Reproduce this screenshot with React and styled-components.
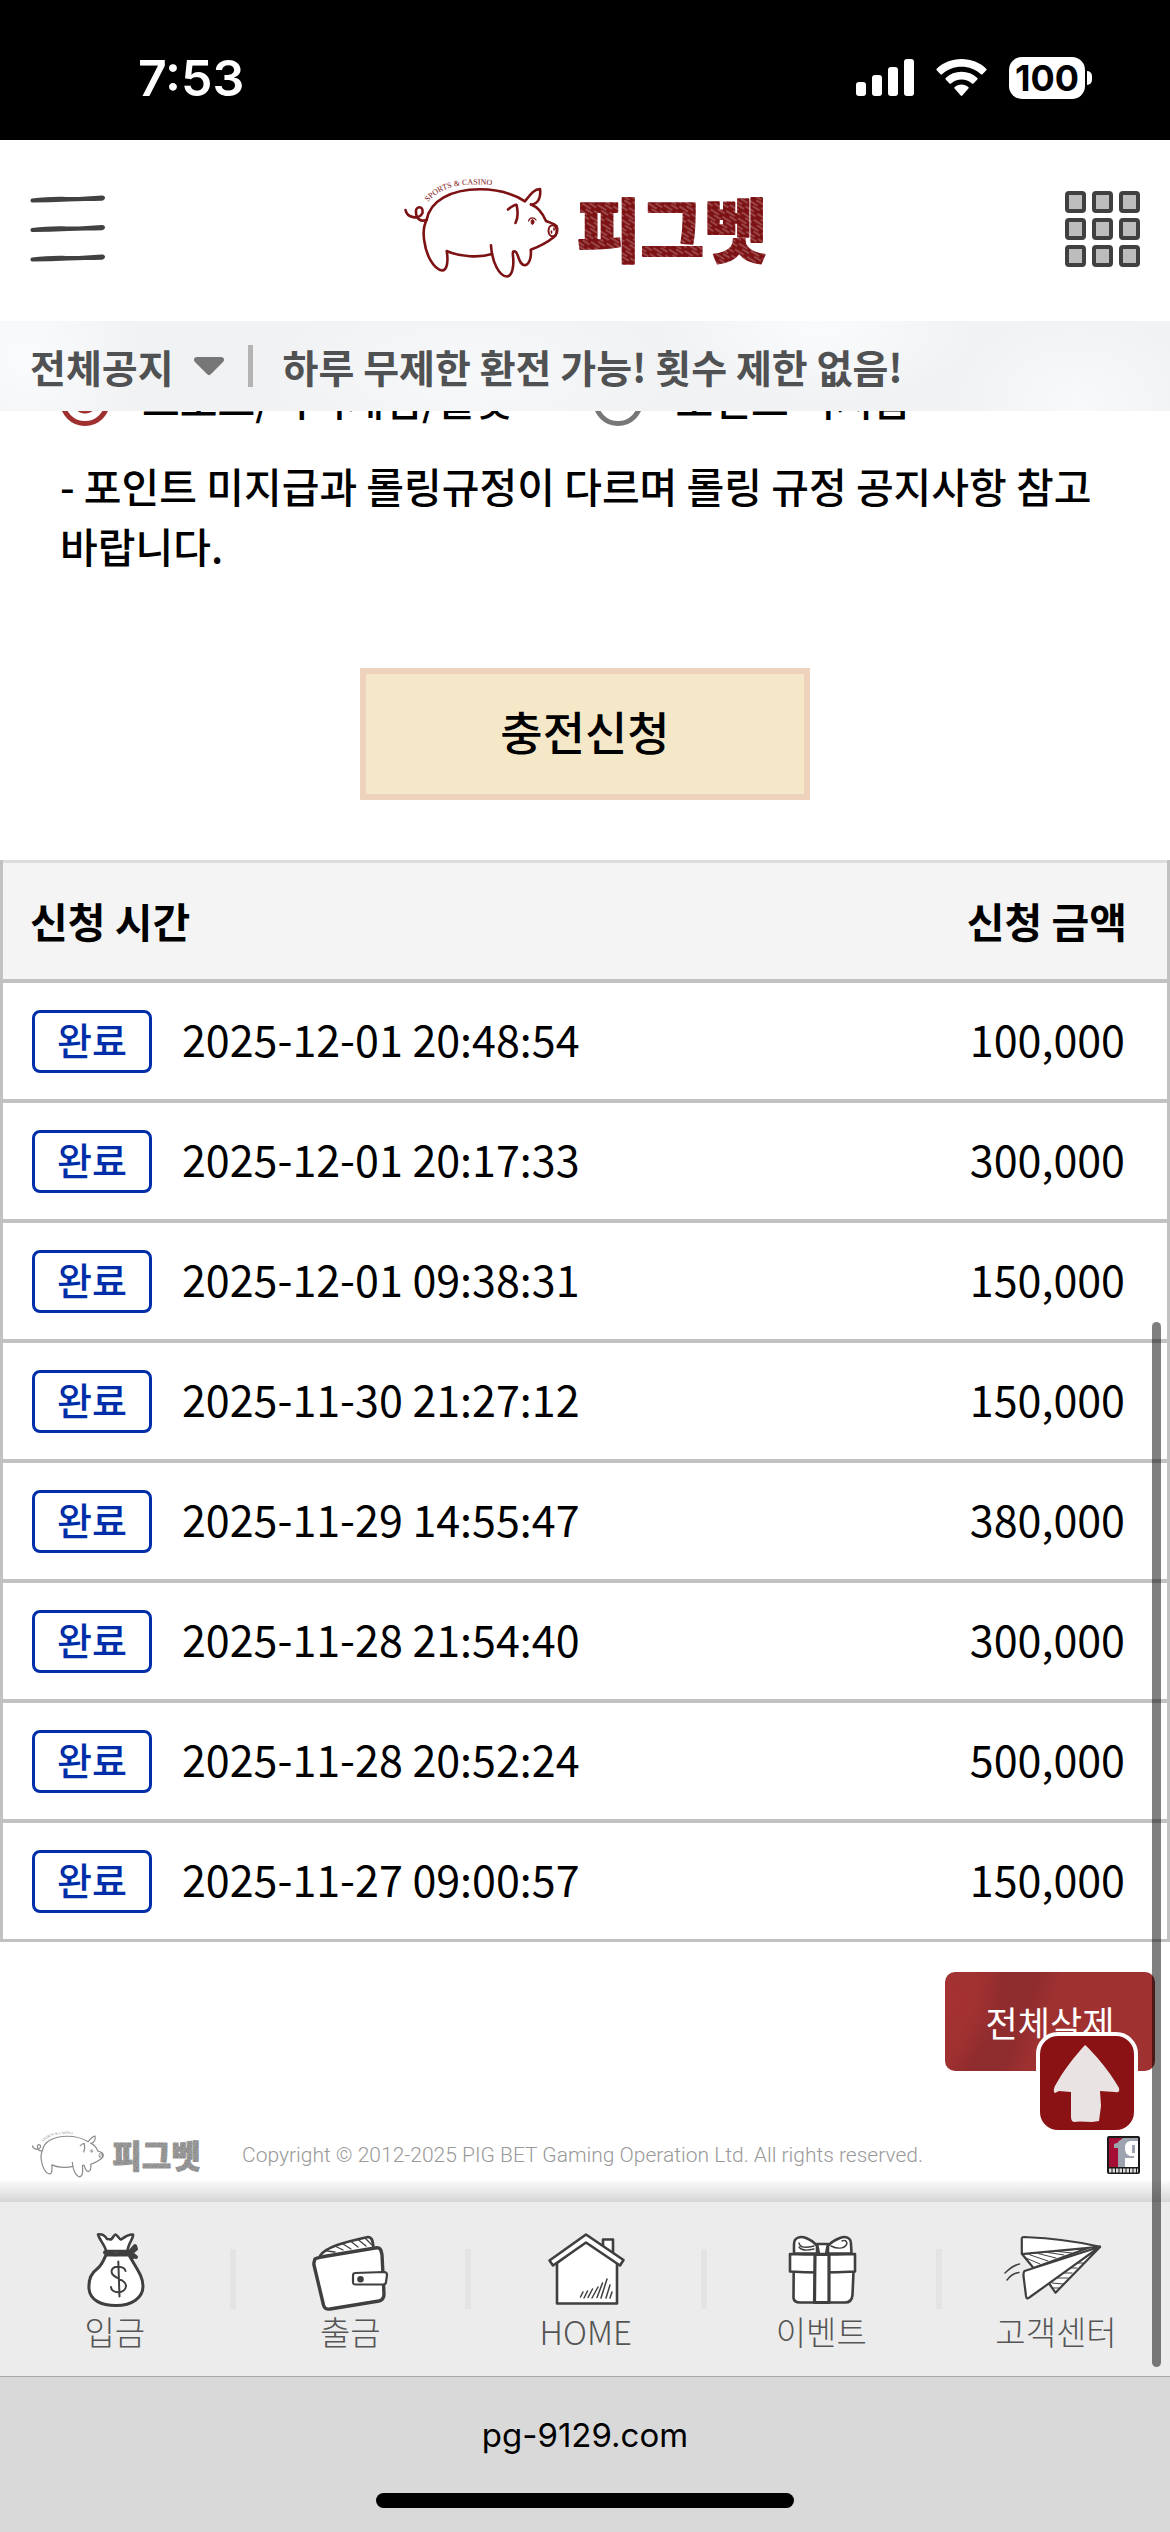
import styled, { createGlobalStyle } from 'styled-components';

const GlobalStyle = createGlobalStyle`
  *{
    box-sizing:border-box;
  }
  body{
    margin:0;
    background:#fff;
    color:#000;
    font-family:"Noto Sans CJK KR", sans-serif;
  }
  button, input{
    font-family:inherit;
  }
`

const Screen = styled.div`
  position:relative;
  display:flex;
  flex-direction:column;
  min-height:100vh;
`

/* status bar */
const StatusBar = styled.div`
  display:flex;
  justify-content:space-between;
  align-items:center;
  height:140px;
  padding:16px 78px 0 138px;
  background:#000;
  color:#fff;
  font-family:Inter, sans-serif;
`
const Clock = styled.span`
  font-size:50px;
  line-height:60px;
  font-weight:600;
`
const StatusIcons = styled.div`
  display:flex;
  align-items:center;
  gap:22px;
`
const Battery = styled.div`
  display:flex;
  align-items:center;
  gap:2px;
`
const BatteryBody = styled.span`
  width:76px;
  height:42px;
  border-radius:13px;
  background:#fff;
  color:#000;
  font-size:36px;
  line-height:42px;
  font-weight:700;
  text-align:center;
`
const BatteryTip = styled.span`
  width:5px;
  height:14px;
  border-radius:0 5px 5px 0;
  background:#fff;
`

/* site header */
const Header = styled.header`
  display:flex;
  justify-content:space-between;
  align-items:center;
  height:181px;
  padding:0 30px;
  background:#fff;
`
const IconButton = styled.button`
  display:block;
  padding:0;
  border:none;
  background:none;
`
const LogoLink = styled.a`
  display:block;
  line-height:0;
`
const Notice = styled.div`
  display:flex;
  align-items:center;
  height:90px;
  padding:0 30px;
  background:
    radial-gradient(ellipse 120px 90px at 92% 90%, #f8f9fb, transparent),
    radial-gradient(ellipse 160px 70px at 70% 10%, #fafbfd, transparent),
    radial-gradient(ellipse 200px 90px at 40% 60%, #f7f8fa, transparent),
    radial-gradient(ellipse 120px 120px at 2% 40%, #fafbfc, transparent),
    #f1f2f4;
  color:#505152;
  font-size:39px;
  line-height:56px;
  font-weight:700;
`
const NoticeMenu = styled.button`
  display:flex;
  align-items:center;
  gap:20px;
  padding:0;
  border:none;
  background:none;
  color:inherit;
  font-size:inherit;
  line-height:inherit;
  font-weight:inherit;
`
const NoticeLine = styled.span`
  width:5px;
  height:42px;
  margin:0 30px 0 24px;
  background:#b3b3b3;
`

/* deposit form */
const Main = styled.main`
  flex:1;
  overflow:hidden;
`
const Form = styled.form`
  display:flex;
  flex-direction:column;
  padding:0 60px;
`
const RadioRow = styled.div`
  display:flex;
  gap:80px;
  margin-top:-35px;
`
const RadioLabel = styled.label`
  display:flex;
  align-items:center;
  gap:32px;
  height:50px;
  font-size:41px;
  line-height:50px;
  font-weight:500;
`
const RadioText = styled.span`
  padding-bottom:6px;
`
const Radio = styled.input`
  appearance:none;
  width:50px;
  height:50px;
  margin:0;
  border:5px solid #777;
  border-radius:50%;
  background:#fff;

  &:checked{
    border-color:#a03030;
    background:radial-gradient(circle, #a03030 12px, #fff 13px);
  }
`
const Guide = styled.p`
  margin:29px 0 93px;
  font-size:41px;
  line-height:60px;
  font-weight:500;
`
const SubmitButton = styled.button`
  align-self:center;
  width:450px;
  height:132px;
  margin-bottom:60px;
  padding:0 0 8px;
  border:6px solid #eed2bb;
  background:#f5e8c9;
  color:#000;
  font-size:46px;
  font-weight:500;
`

/* history */
const History = styled.table`
  width:100%;
  border-collapse:separate;
  border-spacing:0;
  border-right:3px solid #c1c1c1;
  border-left:3px solid #c1c1c1;
`
const HeadCell = styled.th`
  height:123px;
  padding:${props => props.$right ? '0 40px 3px 0' : '0 0 3px 27px'};
  border-top:3px solid #ddd;
  border-bottom:4px solid #c1c1c1;
  background:#f4f4f4;
  font-size:41px;
  line-height:60px;
  font-weight:700;
  text-align:${props => props.$right ? 'right' : 'left'};
`
const Cell = styled.td`
  height:120px;
  padding:${props => props.$right ? '0 42px 6px 0' : '0 0 0 29px'};
  border-bottom:4px solid #c1c1c1;
  font-size:43px;
  line-height:60px;
  text-align:${props => props.$right ? 'right' : 'left'};

  tr:last-child &{
    height:119px;
    border-bottom-width:3px;
  }
`
const TimeBox = styled.div`
  display:flex;
  align-items:center;
  gap:30px;
`
const Badge = styled.span`
  width:120px;
  height:63px;
  border:3px solid #002ea8;
  border-radius:8px;
  color:#002ea8;
  font-size:38px;
  line-height:52px;
  font-weight:500;
  text-align:center;
`
const Time = styled.span`
  padding-bottom:6px;
`
const Actions = styled.div`
  position:relative;
  display:flex;
  justify-content:flex-end;
  padding:30px 15px 0 0;
`
const DeleteButton = styled.button`
  width:210px;
  height:99px;
  border:none;
  border-radius:10px;
  background:
    radial-gradient(ellipse 50px 60px at 5% 30%, #a53232, transparent),
    linear-gradient(110deg, #9f3030 15%, #8f2c2d 25%, #8f2c2d 38%, #9f3131 48%);
  color:#fff;
  font-size:35px;
`
const TopButton = styled.button`
  position:absolute;
  top:90px;
  right:32px;
  width:102px;
  height:102px;
  padding:0;
  border:4px solid #fff;
  border-radius:22px;
  background:#8b1214;
`

/* footer */
const Footer = styled.footer`
  display:flex;
  align-items:center;
  padding:60px 30px 0;
`
const Copyright = styled.small`
  flex:1;
  padding-left:40px;
  color:#999;
  font-family:Roboto, sans-serif;
  font-size:21px;
  line-height:30px;
  font-weight:300;
`
const NavShadow = styled.div`
  height:21px;
  background:linear-gradient(#fafafa, #d6d6d6);
`
const Nav = styled.nav`
  display:grid;
  grid-template-columns:repeat(4, 1fr) calc(20% - 6px);
  height:174px;
  background:#ececec;
`
const NavItem = styled.a`
  position:relative;
  display:flex;
  flex-direction:column;
  align-items:center;
  padding-top:30px;
  color:#555;
  font-size:33px;
  line-height:42px;
  font-weight:300;
  text-decoration:none;

  &:not(:last-child){
    padding-right:6px;
  }
  &:not(:last-child)::after{
    content:"";
    position:absolute;
    top:47px;
    right:0;
    width:6px;
    height:60px;
    background:#e4e4e4;
  }
`
const AddressBar = styled.div`
  display:flex;
  flex-direction:column;
  align-items:center;
  justify-content:space-between;
  height:156px;
  padding:38px 0 24px;
  border-top:1px solid #a9a9a9;
  background:#d9d9d9;
  font-family:Inter, sans-serif;
  font-size:33px;
  line-height:40px;
`
const HomeBar = styled.span`
  width:418px;
  height:15px;
  border-radius:8px;
  background:#000;
`
const ScrollThumb = styled.span`
  position:absolute;
  top:1322px;
  right:9px;
  bottom:165px;
  z-index:2;
  width:9px;
  border-radius:5px;
  background:rgba(0, 0, 0, .5);
`

function Logo({ id, color, width }) {
  const fill = `url(#${id})`
  return (
    <svg width={width} viewBox="0 0 370 105" role="img" aria-label="피그벳">
      <defs>
        <pattern id={id} width="14" height="7" patternUnits="userSpaceOnUse" patternTransform="rotate(32)">
          <rect width="14" height="7" fill={color} />
          <path d="M0 2H10M6 5H14" stroke="#fff" strokeWidth=".6" opacity=".7" />
        </pattern>
        <path id={`${id}-arc`} d="M28 24C42 7 68 3 106 9" />
      </defs>
      <g fill="none" stroke={color} strokeWidth="2.6" strokeLinecap="round" strokeLinejoin="round">
        <path d="M26.7 41.7C30 23 50 11.5 80 11.3C98 11.3 112 15 125 23.3C130 17 134 11 140 11C141 18 139 26 131 26.5" />
        <path d="M131 26.5C138 29 143 36 146 43C150 45 154 45 156.5 48C158 52 157 57 154 59C149 63 141 68 130.7 71.7C131.500 78 130 86 125 87.300C119 87 119 78 116 74C113 72 112.500 74 113 78C114 86 113 98 107 98.500C99 98 92 84 91 67.300" />
        <path d="M92 76C80 80 60 79 46.700 73C48.500 84 47 92.500 42 92.500C33 91 26 76 24.500 64C23 56 24 47 26.700 41.700" />
        <path d="M5.500 32C7 40 19 42 22.500 35C24 27 15 28 16 34C16 41 21 44 26 42" />
        <path d="M108 31.500C111 29 114 27 116.500 26.800C118 33 118 40 115.500 45" />
        <ellipse cx="152.500" cy="52.700" rx="4" ry="5.500" strokeWidth="2" />
        <path d="M151.500 53V55M154 50V52" strokeWidth="1.600" />
        <path d="M128.500 43C130 39 134 39 136 42" strokeWidth="1.200" />
        <ellipse cx="132.500" cy="44" rx="1.400" ry="2.400" fill={color} strokeWidth="1" />
      </g>
      <text fill={color} fontFamily="Liberation Serif, serif" fontSize="8">
        <textPath href={`#${id}-arc`}>SPORTS &amp; CASINO</textPath>
      </text>
      <text
        x="177"
        y="79"
        fill={fill}
        stroke={fill}
        strokeWidth="2"
        strokeLinejoin="round"
        fontFamily="Noto Sans CJK KR, sans-serif"
        fontSize="69"
        fontWeight="900"
      >
        피그벳
      </text>
    </svg>
  )
}

function SignalIcon() {
  return (
    <svg width="58" height="38" viewBox="0 0 58 38" fill="#fff" aria-hidden="true">
      <rect y="23" width="10" height="14" rx="3" />
      <rect x="16" y="16" width="10" height="21" rx="3" />
      <rect x="32" y="8" width="10" height="29" rx="3" />
      <rect x="48" width="10" height="37" rx="3" />
    </svg>
  )
}

function WifiIcon() {
  return (
    <svg width="51" height="38" viewBox="0 0 51 38" fill="#fff" aria-hidden="true">
      <path d="M25.500 0C16 0 7 3.600 .7 9.700C.2 10.200 .2 10.800 .7 11.300L4.500 15.200C5 15.700 5.600 15.700 6.100 15.200C11.300 10.300 18.200 7.700 25.500 7.700S39.700 10.300 44.900 15.200C45.400 15.700 46 15.700 46.500 15.200L50.300 11.300C50.800 10.800 50.800 10.200 50.300 9.700C44 3.600 35 0 25.500 0Z" />
      <path d="M25.500 12.800C19.500 12.800 14 15 9.700 18.900C9.200 19.400 9.200 20 9.700 20.500L13.500 24.400C14 24.800 14.600 24.800 15.100 24.400C17.900 21.900 21.600 20.500 25.500 20.500S33.100 21.900 35.900 24.400C36.400 24.800 37 24.800 37.500 24.400L41.300 20.500C41.800 20 41.800 19.400 41.300 18.900C37 15 31.500 12.800 25.500 12.800Z" />
      <path d="M25.500 25.500C22.900 25.500 20.500 26.400 18.700 28C18.100 28.500 18.100 29.100 18.600 29.600L24.700 36.500C25.200 37 25.800 37 26.300 36.500L32.400 29.600C32.900 29.100 32.900 28.500 32.300 28C30.500 26.400 28.100 25.500 25.500 25.500Z" />
    </svg>
  )
}

function MenuIcon() {
  const line = 'M2 3.500C14 2.500 24 1.500 36 2C48 2.500 60 1 72 .5C76 .5 76 5 72 5.800C60 6 50 6.200 38 6.500C26 7 14 7.500 2 7.500C0 7 0 4 2 3.500Z'
  return (
    <svg width="75" height="68" viewBox="0 0 75 68" fill="#414141" aria-hidden="true">
      <path d={line} />
      <path d={line} transform="translate(0 29.500)" />
      <path d={line} transform="translate(0 59)" />
    </svg>
  )
}

function GridIcon() {
  const steps = [2, 29, 56]
  return (
    <svg width="75" height="76" viewBox="0 0 75 76" aria-hidden="true">
      {steps.map(y => steps.map(x => (
        <rect key={`${x}-${y}`} x={x} y={y} width="17" height="18" rx="2" fill="#bdbdbd" stroke="#404040" strokeWidth="4" />
      )))}
    </svg>
  )
}

function AdultIcon() {
  return (
    <svg width="33" height="38" viewBox="0 0 33 38" role="img" aria-label="19">
      <rect width="33" height="38" rx="2" fill="#1b191a" />
      <rect x="2" y="2" width="9" height="29" fill="#a50f35" />
      <rect x="11" y="2" width="20" height="29" fill="#9da4b0" />
      <path d="M11 2H16L11 6Z" fill="#a50f35" />
      <path d="M7 8C11 7 12 6 13 4H18V31H11V12H7Z" fill="#9da4b0" />
      <path d="M31 5H23C19 6 18 9 18 12C18 17 20 19 23 20H27V22H18V31H31Z" fill="#fff" />
      <path d="M25 9H28V17H25Z" fill="#9da4b0" />
      <path d="M2 34.500H31" stroke="#ddd" strokeWidth="4" strokeDasharray="2.500 1" />
    </svg>
  )
}

function ArrowIcon() {
  return (
    <svg width="94" height="94" viewBox="0 0 94 94" aria-hidden="true">
      <path
        d="M45 9C51 14 70 35 79 52C80 56 78 57 75 56L60 55L61 70L59 85L52 86L40 85.500L34 86C31 85 31 82 31 79V56L19 55L15 57C13 56 14 52 15 50C23 35 35 20 45 9Z"
        fill="#e9e4e3"
      />
    </svg>
  )
}

const iconProps = {
  width: 100,
  height: 78,
  viewBox: '0 0 100 78',
  overflow: 'visible',
  fill: '#fff',
  stroke: '#3f3f3f',
  strokeWidth: 2.6,
  strokeLinecap: 'round',
  strokeLinejoin: 'round',
  'aria-hidden': true,
}

function BagIcon() {
  return (
    <svg {...iconProps}>
      <path d="M41 19C40 13 35 9 33 2.500C36 1.500 40 3 42 7L46 7.500C48 6 49 2.500 50.500 2.500S54 7 56 7.500C59 6 62 2 68 2.500C69 6 63 11 62.500 19Z" />
      <path d="M41 23C38 29 37 33 32 37C25 42 23.500 50 24 57C25 68 36 73.500 51 73.500C67 73.500 78 66 78 54C78 44 71 36 64 23Z" strokeWidth="3" />
      <path d="M40 20.500C48 23 57 22.500 65 19.500M65 19.500L70 14L71 17L66 21L71 25M65 22L68 25" fill="none" strokeWidth="4" />
      <path d="M53.300 29.500L54.500 64.500M60.500 39C60 34 47 32.500 46.500 39.500C46.500 47 60.500 46 61 53.500C61 62.500 46 62 46 55" fill="none" strokeWidth="2" />
    </svg>
  )
}

function WalletIcon() {
  return (
    <svg {...iconProps}>
      <path d="M20 24C25 15 45 10 68 5C72 5 73 9 73.500 16" />
      <path d="M27 19L35 20M35 14L43 18M43 12L51 17M51 9.500L58 15M58 7.500L66 14M65 6L72 13" strokeWidth="1.300" />
      <path d="M15 27C14 30 13.500 31 14 33L23.500 73C24.500 76.500 26 77.500 30 77L79 69C82.500 68 84 66 84 62L82 23C81 17 80 15 75 16L24 24.500C19 25.500 16 26 15 27Z" strokeWidth="3.400" />
      <path d="M55 41L84 40C86 40 87 41 87 43L86 50C86 52 85 52.500 83 52.500H56C53.500 52.500 53 52 53 50V44C53 42 53.500 41 55 41Z" strokeWidth="2.200" />
      <circle cx="60.500" cy="47.300" r="2" fill="#3f3f3f" />
    </svg>
  )
}

function HouseIcon() {
  return (
    <svg {...iconProps}>
      <path d="M67 20V7.500H77V24Z" />
      <path d="M21 31L50 9L81 30L81 71.500H21Z" />
      <path d="M50 2.500L13.500 28.500L17 33.500L50 10.500L84 33.500L87.500 28Z" />
      <path d="M44.500 65L47 60M48 66L51.500 59M52 65.500L56.500 57M56 66L62 55M61 65.500L66.500 51M65 66L71 47M70 66L74 53M74 66L76 60" strokeWidth="1.500" />
    </svg>
  )
}

function GiftIcon() {
  return (
    <svg {...iconProps}>
      <path d="M22.700 39.500L22.500 66C23 69.500 25 70.500 29 70.500H74C79 70.500 81 68 81.500 63L82.500 39.500Z" />
      <path d="M19 22C33 22.500 66 22.500 84 22L84 39.500C65 40.500 34 40.500 19 39.500Z" />
      <path d="M44 22.500L43.500 70.500H58L58 22.500Z" strokeWidth="3.200" />
      <path d="M46 21.500H23L23 12C23 5 30 4 35 6C40 8 43 10 46 14ZM57 21.500H80.500L80 12C80 5 74 4 69 6C64 8 60 10 57 14Z" />
      <path d="M46 12H57L55 22H48Z" />
      <path d="M43 14C35 16 29 16 28 11M43 17C35 19 30 18 28 15M60 14C68 18 75 16 76 11C75 8 73 8 71 9" fill="none" strokeWidth="1.400" />
    </svg>
  )
}

function PlaneIcon() {
  return (
    <svg {...iconProps} strokeWidth="2.200">
      <path d="M42 50L49.500 60.700L94 15Z" />
      <path d="M48 46H62M52 41H66M56 36H71M61 31H77M46 51L57 52M47 56H53" strokeWidth="1" />
      <path d="M16 22L27.500 36L82 16Z" />
      <path d="M94 14.700C70 9 40 6 18 5C16 5 15.500 6 15.800 8V22L80 16Z" />
      <path d="M23 22.500L42 29M32 21.500L50 26M42 20.500L58 23M52 19.500L66 21M20 26L34 32" strokeWidth="1" />
      <path d="M94 14.700L18.500 39C17.500 40 17.300 41 17.500 44L20 64C20.500 67 22 67 24 65Z" />
      <path d="M-1 41C3 37 8 33 13.500 32M1 48C4 44 8 41 13 40.500" fill="none" strokeWidth="1.500" />
    </svg>
  )
}

const history = [
  ['2025-12-01 20:48:54', '100,000'],
  ['2025-12-01 20:17:33', '300,000'],
  ['2025-12-01 09:38:31', '150,000'],
  ['2025-11-30 21:27:12', '150,000'],
  ['2025-11-29 14:55:47', '380,000'],
  ['2025-11-28 21:54:40', '300,000'],
  ['2025-11-28 20:52:24', '500,000'],
  ['2025-11-27 09:00:57', '150,000'],
]

const menus = [
  { name: '입금', Icon: BagIcon },
  { name: '출금', Icon: WalletIcon },
  { name: 'HOME', Icon: HouseIcon },
  { name: '이벤트', Icon: GiftIcon },
  { name: '고객센터', Icon: PlaneIcon },
]

function App() {
  return (
    <Screen>
      <GlobalStyle />
      <StatusBar>
        <Clock>7:53</Clock>
        <StatusIcons>
          <SignalIcon />
          <WifiIcon />
          <Battery>
            <BatteryBody>100</BatteryBody>
            <BatteryTip />
          </Battery>
        </StatusIcons>
      </StatusBar>

      <Header>
        <IconButton aria-label="메뉴"><MenuIcon /></IconButton>
        <LogoLink href="#"><Logo id="logo-red" color="#7d1214" width={370} /></LogoLink>
        <IconButton aria-label="전체 메뉴"><GridIcon /></IconButton>
      </Header>
      <Notice>
        <NoticeMenu>
          전체공지
          <svg width="30" height="20" viewBox="0 0 30 20" aria-hidden="true">
            <path d="M3 1H27C30 1 31 4 29 6L17 18C16 19.500 14 19.500 13 18L1 6C-1 4 0 1 3 1Z" fill="#777" />
          </svg>
        </NoticeMenu>
        <NoticeLine />
        <span>하루 무제한 환전 가능! 횟수 제한 없음!</span>
      </Notice>

      <Main>
        <Form onSubmit={(e) => e.preventDefault()}>
          <RadioRow>
            <RadioLabel>
              <Radio type="radio" name="bonus" defaultChecked />
              <RadioText>스포츠/미니게임/슬롯</RadioText>
            </RadioLabel>
            <RadioLabel>
              <Radio type="radio" name="bonus" />
              <RadioText>포인트 미지급</RadioText>
            </RadioLabel>
          </RadioRow>
          <Guide>- 포인트 미지급과 롤링규정이 다르며 롤링 규정 공지사항 참고 바랍니다.</Guide>
          <SubmitButton>충전신청</SubmitButton>
        </Form>

        <History>
          <thead>
            <tr>
              <HeadCell>신청 시간</HeadCell>
              <HeadCell $right>신청 금액</HeadCell>
            </tr>
          </thead>
          <tbody>
            {history.map(([time, amount]) => (
              <tr key={time}>
                <Cell>
                  <TimeBox>
                    <Badge>완료</Badge>
                    <Time>{time}</Time>
                  </TimeBox>
                </Cell>
                <Cell $right>{amount}</Cell>
              </tr>
            ))}
          </tbody>
        </History>
        <Actions>
          <DeleteButton>전체삭제</DeleteButton>
          <TopButton aria-label="위로"><ArrowIcon /></TopButton>
        </Actions>
        <Footer>
          <Logo id="logo-gray" color="#8c8c8c" width={172} />
          <Copyright>Copyright © 2012-2025 PIG BET Gaming Operation Ltd. All rights reserved.</Copyright>
          <AdultIcon />
        </Footer>
      </Main>

      <NavShadow />
      <Nav>
        {menus.map(({ name, Icon }) => (
          <NavItem href="#" key={name}>
            <Icon />
            {name}
          </NavItem>
        ))}
      </Nav>
      <AddressBar>
        pg-9129.com
        <HomeBar />
      </AddressBar>
      <ScrollThumb />
    </Screen>
  );
}

export default App;
